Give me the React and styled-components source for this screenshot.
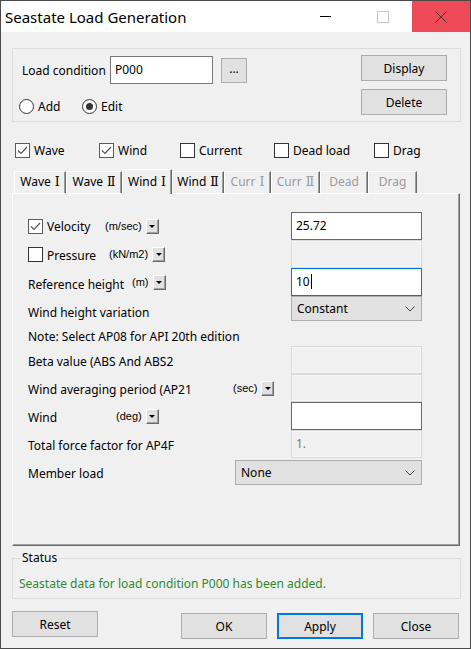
import React from 'react';
import styled, { createGlobalStyle } from 'styled-components';

const Global = createGlobalStyle`
  body {
    margin: 0;
    background: #f0f0f0;
    font-family: 'Noto Sans', 'Liberation Sans', sans-serif;
    font-size: 12px;
    color: #000;
  }
`;

const Window = styled.div`
  width: 471px;
  height: 649px;
  box-sizing: border-box;
  border: 1px solid #4a4a4a;
  background: #f0f0f0;
  display: flex;
  flex-direction: column;
  overflow: hidden;
`;

const TitleBar = styled.div`
  height: 31px;
  background: #fff;
  display: flex;
  align-items: center;
  flex-shrink: 0;
`;

const Title = styled.div`
  flex: 1;
  padding-left: 4px;
  font-family: 'Noto Sans', sans-serif;
  font-size: 15px;
  color: #000;
`;

const Caption = styled.div`
  width: 58px;
  height: 31px;
  display: flex;
  align-items: center;
  justify-content: center;
  background: ${(p) => (p.close ? '#ef4a57' : 'transparent')};
`;

const Body = styled.div`
  flex: 1;
  padding: 0 9px 0 11px;
  display: flex;
  flex-direction: column;
`;

const TopGroup = styled.div`
  margin-top: 16px;
  height: 74px;
  box-sizing: border-box;
  border: 1px solid #dcdcdc;
  display: flex;
  justify-content: space-between;
  padding: 6px 13px 0 9px;
`;

const LeftCol = styled.div`
  display: flex;
  flex-direction: column;
`;

const Line = styled.div`
  display: flex;
  align-items: center;
  height: ${(p) => p.h || 28}px;
  margin-top: ${(p) => p.mt || 0}px;
`;

const Label = styled.span`
  width: ${(p) => (p.w ? `${p.w}px` : 'auto')};
  flex-shrink: 0;
  padding-top: ${(p) => (p.pt ?? 2)}px;
  white-space: nowrap;
  color: ${(p) => p.color || '#000'};
`;

const TextBox = styled.div`
  box-sizing: border-box;
  width: ${(p) => p.w || 131}px;
  height: ${(p) => p.h || 28}px;
  background: ${(p) => (p.disabled ? '#f0f0f0' : '#fff')};
  border: 1px solid
    ${(p) => (p.focus ? '#0078d7' : p.disabled ? '#d9d9d9' : '#6a6a6a')};
  box-shadow: ${(p) => (p.disabled ? 'inset 0 0 0 1px #f7f7f7' : 'none')};
  padding: 4px 4px 0;
  color: ${(p) => (p.disabled ? '#8a7070' : '#000')};
  display: flex;
  align-items: flex-start;
`;

const Caret = styled.span`
  display: inline-block;
  width: 1px;
  height: 15px;
  background: #000;
  margin: 1px 0 0 1px;
`;

const Button = styled.button`
  box-sizing: border-box;
  width: ${(p) => p.w || 86}px;
  height: ${(p) => p.h || 26}px;
  margin-top: ${(p) => p.mt || 0}px;
  background: #e1e1e1;
  border: ${(p) => (p.primary ? '2px solid #0078d7' : '1px solid #adadad')};
  font-family: 'Noto Sans', 'Liberation Sans', sans-serif;
  font-size: 12px;
  color: #000;
  padding: 0;
  flex-shrink: 0;
`;

const RightCol = styled.div`
  display: flex;
  flex-direction: column;
  gap: 8px;
`;

const RadioRow = styled.div`
  display: flex;
  align-items: center;
  height: 18px;
  margin-top: 13px;
  margin-left: -3px;
`;

const RadioItem = styled.label`
  display: flex;
  align-items: center;
  width: ${(p) => p.w}px;
  gap: 4px;
`;

const RadioCircle = styled.span`
  box-sizing: border-box;
  width: 15px;
  height: 15px;
  border-radius: 50%;
  border: 1px solid #333;
  background: #fff;
  display: flex;
  align-items: center;
  justify-content: center;
  &::after {
    content: '';
    width: 7px;
    height: 7px;
    border-radius: 50%;
    background: ${(p) => (p.on ? '#333' : 'transparent')};
  }
`;

const CheckRow = styled.div`
  display: flex;
  align-items: center;
  height: 20px;
  margin-top: 18px;
  padding-left: 3px;
`;

const CheckItem = styled.label`
  display: flex;
  align-items: center;
  width: ${(p) => (p.w ? `${p.w}px` : 'auto')};
  flex-shrink: 0;
  gap: 4px;
`;

const Box = styled.span`
  box-sizing: border-box;
  width: 15px;
  height: 15px;
  border: 1px solid ${(p) => (p.on ? '#5a5a5a' : '#333')};
  background: #fff;
  display: flex;
  align-items: center;
  justify-content: center;
  flex-shrink: 0;
`;

const TabStrip = styled.div`
  display: flex;
  align-items: flex-end;
  height: 24px;
  margin-top: 9px;
  padding-left: 2px;
`;

const Tab = styled.div`
  box-sizing: border-box;
  width: ${(p) => p.w}px;
  height: ${(p) => (p.active ? 25 : 22)}px;
  margin-bottom: ${(p) => (p.active ? -1 : 0)}px;
  position: relative;
  z-index: ${(p) => (p.active ? 1 : 0)};
  background: #f0f0f0;
  border-top: 1px solid #fff;
  border-left: 1px solid #fff;
  border-right: 1px solid #696969;
  box-shadow: inset -1px 0 0 #a0a0a0;
  color: ${(p) => (p.disabled ? '#9a9a9a' : '#000')};
  display: flex;
  justify-content: center;
  align-items: baseline;
  white-space: nowrap;
  line-height: 16px;
  padding-top: ${(p) => (p.active ? 4 : 2)}px;
`;

const Numeral = styled.span`
  font-family: 'DejaVu Serif', 'Noto Sans CJK SC', serif;
  font-size: 12.5px;
  margin-left: 4px;
`;

const Panel = styled.div`
  box-sizing: border-box;
  width: 448px;
  height: 353px;
  border-top: 1px solid #fff;
  border-left: 1px solid #fff;
  border-right: 1px solid #696969;
  border-bottom: 1px solid #696969;
  box-shadow: inset -1px -1px 0 #a0a0a0;
  padding: 18px 37px 0 15px;
  display: flex;
  flex-direction: column;
`;

const Row = styled.div`
  display: flex;
  align-items: ${(p) => (p.top ? 'flex-start' : 'center')};
  height: ${(p) => p.h || 28}px;
  margin-top: ${(p) => p.mt || 0}px;
`;

const LabelArea = styled.div`
  flex: 1;
  display: flex;
  align-items: center;
  align-self: center;
`;

const CheckLabel = styled.div`
  display: flex;
  align-items: center;
  gap: 4px;
  width: ${(p) => p.w}px;
  flex-shrink: 0;
`;

const Unit = styled.span`
  font-family: 'Liberation Sans', Arial, sans-serif;
  font-size: 11px;
  margin-right: 4px;
`;

const MiniDrop = styled.span`
  box-sizing: border-box;
  width: 13px;
  height: 15px;
  background: #e1e1e1;
  border-top: 1px solid #fff;
  border-left: 1px solid #fff;
  border-right: 1px solid #696969;
  border-bottom: 1px solid #696969;
  box-shadow: inset -1px -1px 0 #a0a0a0;
  display: flex;
  align-items: center;
  justify-content: center;
  &::after {
    content: '';
    border-left: 3px solid transparent;
    border-right: 3px solid transparent;
    border-top: 3px solid #000;
  }
`;

const Select = styled.div`
  box-sizing: border-box;
  width: ${(p) => p.w || 131}px;
  height: 25px;
  background: #e1e1e1;
  border: 1px solid #adadad;
  display: flex;
  align-items: center;
  justify-content: space-between;
  padding: 0 6px 0 5px;
`;

const StatusSet = styled.fieldset`
  margin: 4px 0 0;
  width: 449px;
  box-sizing: border-box;
  border: 1px solid #dcdcdc;
  padding: 0 6px 6px;
  min-width: 0;
`;

const Legend = styled.legend`
  padding: 0 2px;
  margin-left: 1px;
  line-height: 16px;
`;

const StatusText = styled.div`
  margin-top: 10px;
  line-height: 16px;
  color: #2f8a2f;
`;

const Footer = styled.div`
  display: flex;
  align-items: flex-start;
  margin-top: 12px;
`;

const FooterRight = styled.div`
  display: flex;
  gap: 10px;
  margin-left: auto;
  margin-right: 2px;
`;

const Check = () => (
  <svg width="11" height="9" viewBox="0 0 11 9">
    <path d="M1 4.5 L4 7.5 L10 1" fill="none" stroke="#555" strokeWidth="1.2" />
  </svg>
);

const CheckBox = ({ on }) => <Box on={on}>{on && <Check />}</Box>;

const Chevron = () => (
  <svg width="10" height="6" viewBox="0 0 10 6">
    <path d="M0.5 0.5 L5 5 L9.5 0.5" fill="none" stroke="#444" strokeWidth="1" />
  </svg>
);

const tabs = [
  { t: 'Wave', n: 'Ⅰ', w: 52 },
  { t: 'Wave', n: 'Ⅱ', w: 56 },
  { t: 'Wind', n: 'Ⅰ', w: 50, active: true },
  { t: 'Wind', n: 'Ⅱ', w: 52 },
  { t: 'Curr', n: 'Ⅰ', w: 47, disabled: true },
  { t: 'Curr', n: 'Ⅱ', w: 49, disabled: true },
  { t: 'Dead', w: 48, disabled: true },
  { t: 'Drag', w: 49, disabled: true },
];

const App = () => (
  <Window>
    <Global />
    <TitleBar>
      <Title>Seastate Load Generation</Title>
      <Caption>
        <svg width="11" height="2" viewBox="0 0 11 2">
          <rect x="0" y="0" width="11" height="1" fill="#000" />
        </svg>
      </Caption>
      <Caption>
        <svg width="12" height="12" viewBox="0 0 12 12">
          <rect x="0.5" y="0.5" width="11" height="11" fill="none" stroke="#c8c8c8" />
        </svg>
      </Caption>
      <Caption close>
        <svg width="12" height="12" viewBox="0 0 12 12">
          <path d="M0.5 0.5 L11.5 11.5 M11.5 0.5 L0.5 11.5" stroke="#3a3a3a" strokeWidth="1" />
        </svg>
      </Caption>
    </TitleBar>

    <Body>
      <TopGroup>
        <LeftCol>
          <Line h={28} mt={1}>
            <Label w={88} pt={0}>Load condition</Label>
            <TextBox w={103} h={28} style={{ borderColor: '#7a7a7a' }}>P000</TextBox>
            <Button w={26} h={25} style={{ marginLeft: 8, paddingBottom: 4 }}>...</Button>
          </Line>
          <RadioRow>
            <RadioItem w={63}>
              <RadioCircle />
              Add
            </RadioItem>
            <RadioItem w={60}>
              <RadioCircle on />
              Edit
            </RadioItem>
          </RadioRow>
        </LeftCol>
        <RightCol>
          <Button>Display</Button>
          <Button>Delete</Button>
        </RightCol>
      </TopGroup>

      <CheckRow>
        <CheckItem w={84}><CheckBox on />Wave</CheckItem>
        <CheckItem w={81}><CheckBox on />Wind</CheckItem>
        <CheckItem w={94}><CheckBox />Current</CheckItem>
        <CheckItem w={100}><CheckBox />Dead load</CheckItem>
        <CheckItem><CheckBox />Drag</CheckItem>
      </CheckRow>

      <TabStrip>
        {tabs.map((tab, i) => (
          <Tab key={i} w={tab.w} active={tab.active} disabled={tab.disabled}>
            {tab.t}
            {tab.n && <Numeral>{tab.n}</Numeral>}
          </Tab>
        ))}
      </TabStrip>

      <Panel>
        <Row>
          <LabelArea>
            <CheckLabel w={77}><CheckBox on /><Label pt={1}>Velocity</Label></CheckLabel>
            <Unit>(m/sec)</Unit>
            <MiniDrop />
          </LabelArea>
          <TextBox>25.72</TextBox>
        </Row>
        <Row>
          <LabelArea>
            <CheckLabel w={81}><CheckBox /><Label pt={2}>Pressure</Label></CheckLabel>
            <Unit>(kN/m2)</Unit>
            <MiniDrop />
          </LabelArea>
          <TextBox disabled />
        </Row>
        <Row>
          <LabelArea>
            <Label w={104} pt={5}>Reference height</Label>
            <Unit>(m)</Unit>
            <MiniDrop />
          </LabelArea>
          <TextBox focus>10<Caret /></TextBox>
        </Row>
        <Row top>
          <LabelArea>
            <Label pt={4}>Wind height variation</Label>
          </LabelArea>
          <Select>Constant<Chevron /></Select>
        </Row>
        <Row h={22}>
          <Label pt={3}>Note: Select AP08 for API 20th edition</Label>
        </Row>
        <Row>
          <LabelArea><Label pt={3}>Beta value (ABS And ABS2</Label></LabelArea>
          <TextBox disabled />
        </Row>
        <Row>
          <LabelArea>
            <Label w={205} pt={3}>Wind averaging period (AP21</Label>
            <Unit>(sec)</Unit>
            <MiniDrop />
          </LabelArea>
          <TextBox disabled />
        </Row>
        <Row>
          <LabelArea>
            <Label w={88} pt={3}>Wind</Label>
            <Unit>(deg)</Unit>
            <MiniDrop />
          </LabelArea>
          <TextBox />
        </Row>
        <Row>
          <LabelArea><Label pt={3}>Total force factor for AP4F</Label></LabelArea>
          <TextBox disabled>1.</TextBox>
        </Row>
        <Row h={25} mt={2}>
          <LabelArea><Label pt={1}>Member load</Label></LabelArea>
          <Select w={187}>None<Chevron /></Select>
        </Row>
      </Panel>

      <StatusSet>
        <Legend>Status</Legend>
        <StatusText>Seastate data for load condition P000 has been added.</StatusText>
      </StatusSet>

      <Footer>
        <Button>Reset</Button>
        <FooterRight>
          <Button mt={2}>OK</Button>
          <Button mt={2} primary>Apply</Button>
          <Button mt={2}>Close</Button>
        </FooterRight>
      </Footer>
    </Body>
  </Window>
);

export default App;
